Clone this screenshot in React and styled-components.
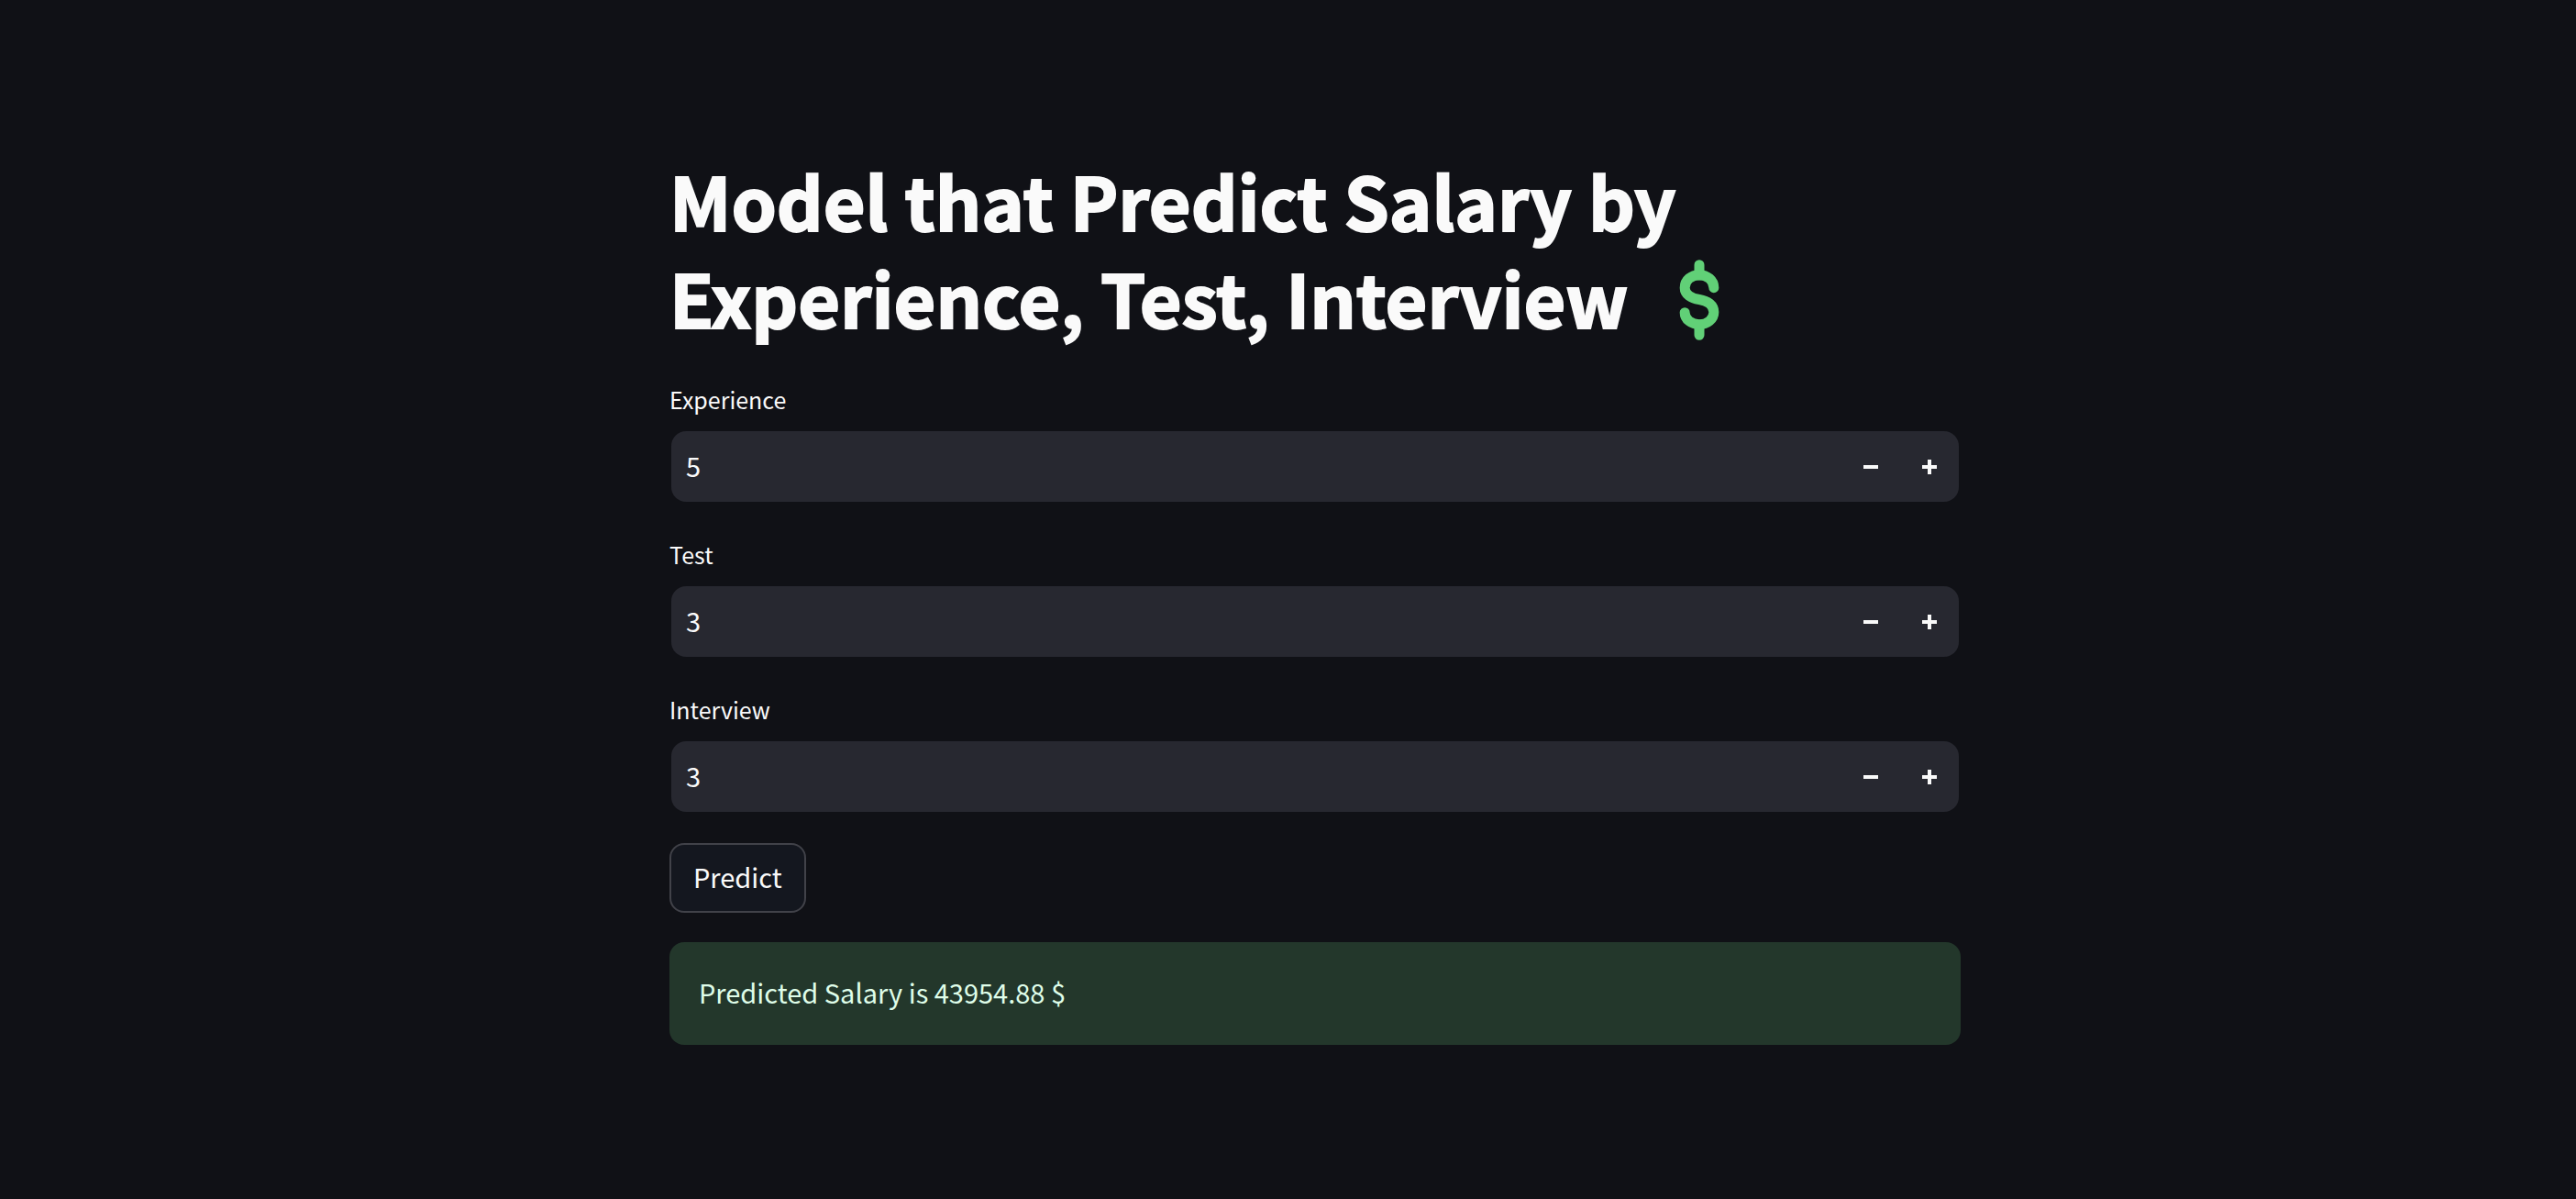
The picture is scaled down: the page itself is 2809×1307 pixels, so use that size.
import React, { useState } from "react";
import styled, { createGlobalStyle } from "styled-components";

const GlobalStyle = createGlobalStyle`
  *, *::before, *::after { box-sizing: border-box; }
  body {
    margin: 0;
    background: #101116;
    color: #fafafa;
    font-family: "Noto Sans CJK SC", "Noto Sans", sans-serif;
    font-size: 29px;
  }
`;

const Page = styled.main`
  min-height: 100vh;
  padding: 165px 0 96px 59px;
  display: flex;
  justify-content: center;
  align-items: flex-start;
`;

const Column = styled.div`
  width: 100%;
  max-width: 1408px;
  display: flex;
  flex-direction: column;
  gap: 32px;
`;

const Title = styled.h1`
  margin: 0 0 8px;
  font-size: 79px;
  font-weight: 700;
  line-height: 106px;
  -webkit-text-stroke: 2px currentColor;
`;

const DollarIcon = styled.svg`
  width: 44px;
  height: 88px;
  margin-left: 38px;
  vertical-align: -13px;
`;

const Form = styled.form`
  display: flex;
  flex-direction: column;
  align-items: flex-start;
  gap: 32px;
`;

const Fields = styled.div`
  width: 100%;
  display: flex;
  flex-direction: column;
  gap: 37px;
`;

const Field = styled.div`
  display: flex;
  flex-direction: column;
  gap: 15px;
`;

const Label = styled.label`
  font-size: 25px;
  line-height: 36px;
`;

const InputBox = styled.div`
  display: flex;
  height: 81px;
  border: 2px solid transparent;
  border-radius: 18px;
  background: #272830;
  background-clip: padding-box;
  overflow: hidden;
`;

const NumberInput = styled.input`
  flex: 1;
  min-width: 0;
  padding: 0 16px 4px;
  border: 0;
  outline: 0;
  background: transparent;
  color: inherit;
  font: inherit;
  appearance: textfield;
  &::-webkit-inner-spin-button,
  &::-webkit-outer-spin-button {
    appearance: none;
    margin: 0;
  }
`;

const StepButton = styled.button`
  width: 64px;
  padding: 0;
  border: 0;
  background: transparent;
  color: inherit;
  display: flex;
  align-items: center;
  justify-content: center;
  cursor: pointer;
`;

const PredictButton = styled.button`
  height: 76px;
  padding: 0 24px 4px;
  border: 2px solid #414249;
  border-radius: 16px;
  background: #14171f;
  color: inherit;
  font: inherit;
  cursor: pointer;
`;

const Alert = styled.output`
  display: block;
  padding: 30px 32px 34px;
  border-radius: 16px;
  background: #23372b;
  color: #dffde9;
  line-height: 48px;
`;

const StepIcon = ({ plus }) => (
  <svg width="16" height="16" viewBox="0 0 16 16" fill="currentColor" aria-hidden="true">
    <path d={plus ? "M6 0h4v6h6v4h-6v6H6v-6H0V6h6z" : "M0 6h16v4H0z"} />
  </svg>
);

function NumberField({ id, label, initial }) {
  const [value, setValue] = useState(initial);
  const step = (delta) => setValue((v) => Number(v) + delta);
  return (
    <Field>
      <Label htmlFor={id}>{label}</Label>
      <InputBox>
        <NumberInput id={id} type="number" value={value} onChange={(e) => setValue(e.target.value)} />
        <StepButton type="button" aria-label={`Decrease ${label}`} onClick={() => step(-1)}>
          <StepIcon />
        </StepButton>
        <StepButton type="button" aria-label={`Increase ${label}`} onClick={() => step(1)}>
          <StepIcon plus />
        </StepButton>
      </InputBox>
    </Field>
  );
}

const fields = [
  { id: "experience", label: "Experience", initial: 5 },
  { id: "test", label: "Test", initial: 3 },
  { id: "interview", label: "Interview", initial: 3 },
];

export default function App() {
  return (
    <>
      <GlobalStyle />
      <Page>
        <Column>
          <Title>
            Model that Predict Salary by Experience, Test, Interview{" "}
            <DollarIcon viewBox="31 39 130 264" fill="none" stroke="#61d077" strokeWidth="33" strokeLinecap="round" aria-hidden="true">
              <path d="M96 56V90M96 252V286" />
              <path d="M143.500 131C143.500 106 121 89 96 89C70 89 48.500 106 48.500 131C48.500 153 69 165 96 169.500C124 174 143.500 188 143.500 211C143.500 234 122 251 96 251C71 251 48.500 235 48.500 212" />
            </DollarIcon>
          </Title>
          <Form onSubmit={(e) => e.preventDefault()}>
            <Fields>
              {fields.map((f) => (
                <NumberField key={f.id} {...f} />
              ))}
            </Fields>
            <PredictButton type="submit">Predict</PredictButton>
          </Form>
          <Alert>Predicted Salary is 43954.88 $</Alert>
        </Column>
      </Page>
    </>
  );
}
